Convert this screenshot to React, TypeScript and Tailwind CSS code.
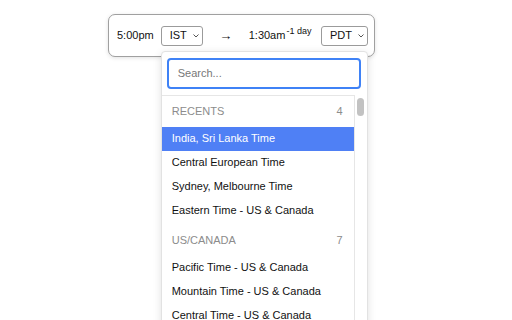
import React from 'react'

const recents = [
  'India, Sri Lanka Time',
  'Central European Time',
  'Sydney, Melbourne Time',
  'Eastern Time - US & Canada',
]

const usCanada = [
  'Pacific Time - US & Canada',
  'Mountain Time - US & Canada',
  'Central Time - US & Canada',
  'Eastern Time - US & Canada',
  'Alaska Time',
  'Hawaii Time',
  'Arizona Time',
]

function Chevron() {
  return (
    <svg width="6" height="4" viewBox="0 0 6 4" className="ml-[6px] mt-[1px]">
      <path d="M0.5 0.5 L3 3 L5.5 0.5" fill="none" stroke="#555" strokeWidth="1" />
    </svg>
  )
}

function ZoneSelect({ label, width }: { label: string; width: string }) {
  return (
    <div
      className={`flex items-center h-[20px] ${width} pl-[8px] border border-[#9b9b9b] rounded-[3px] bg-white text-[11px] text-[#111]`}
    >
      {label}
      <Chevron />
    </div>
  )
}

function Group({
  title,
  count,
  items,
  active,
}: {
  title: string
  count: number
  items: string[]
  active?: number
}) {
  return (
    <div className="pb-[2px]">
      <div className="flex justify-between items-center h-[31px] pl-[10px] pr-[11px] text-[11px] text-[#8c8c8c] uppercase">
        <span>{title}</span>
        <span>{count}</span>
      </div>
      {items.map((item, i) => (
        <div
          key={item}
          className={`flex items-center h-[24px] pl-[10px] text-[11px] ${
            i === active ? 'bg-[#4f80f5] text-white' : 'text-[#111]'
          }`}
        >
          {item}
        </div>
      ))}
    </div>
  )
}

export default function App() {
  return (
    <div className="h-[320px] overflow-hidden bg-white font-['Liberation_Sans',Arial,sans-serif]">
      <div className="pt-[14px] pl-[108px]">
        <div className="relative flex items-center w-[267px] h-[43px] border border-[#a0a0a0] rounded-[7px] bg-white shadow-[0_1px_4px_rgba(0,0,0,0.12)] pl-[8px] pr-[6px] text-[11px] text-[#111]">
          <span>5:00pm</span>
          <div className="relative ml-[7px]">
            <ZoneSelect label="IST" width="w-[42px]" />

            {/* dropdown */}
            <div className="absolute left-0 top-[25px] w-[207px] h-[320px] z-10 bg-white border border-[#e2e2e2] rounded-[4px] shadow-[0_2px_8px_rgba(0,0,0,0.12)]">
              <div className="px-[5px] pt-[6px]">
                <div className="flex items-center h-[31px] w-[194px] border-2 border-[#3f82f6] rounded-[4px] pl-[9px] text-[11px] text-[#777]">
                  Search...
                </div>
              </div>
              <div className="flex mt-[6px]">
                <div className="flex-1 border-t border-r border-[#e6e6e6]">
                  <Group title="Recents" count={4} items={recents} active={0} />
                  <Group title="US/Canada" count={7} items={usCanada} />
                </div>
                <div className="relative w-[12px]">
                  <div className="absolute left-[2px] top-[3px] w-[7px] h-[18px] rounded-full bg-[#c2c2c2]" />
                </div>
              </div>
            </div>
          </div>
          <span className="ml-[16px] w-[14px] text-center text-[13px] leading-none">→</span>
          <span className="ml-[16px]">
            1:30am<sup className="text-[9px] relative -top-[5px] ml-[1px]">-1 day</sup>
          </span>
          <div className="ml-auto">
            <ZoneSelect label="PDT" width="w-[47px]" />
          </div>
        </div>
      </div>
    </div>
  )
}
